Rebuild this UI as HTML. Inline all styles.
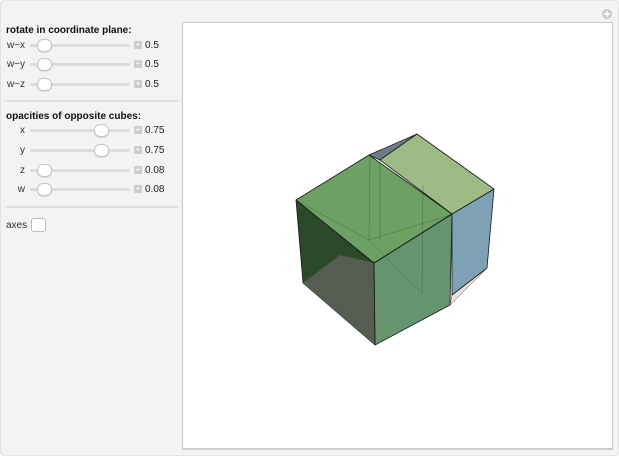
<!DOCTYPE html>
<html><head><style>
body{margin:0;width:619px;height:456px;background:#fff;font-family:"Liberation Sans",sans-serif;overflow:hidden}
.frame{position:absolute;left:0;top:0;width:617px;height:454px;background:#f3f3f3;border:1px solid #e4e4e4;border-radius:4px}
.panel{position:absolute;left:182px;top:22px;width:429px;height:425px;background:#fff;border:1px solid #c8c8c8;border-bottom:2px solid #ccc}
.h{position:absolute;left:6px;font-size:10px;font-weight:bold;color:#111}
.lbl{position:absolute;font-size:10px;color:#333;text-align:right;width:22px}
.track{position:absolute;left:30px;width:100px;height:3px;background:#dcdcdc;border-radius:2px}
.knob{position:absolute;width:13px;height:11px;border-radius:6px;background:#fff;border:1px solid #c4c4c4;box-shadow:0 1px 1px rgba(0,0,0,.1)}
.plus{position:absolute;left:134px;width:8px;height:8px;background:#ccc;border-radius:1px;color:#fff;font-size:8px;line-height:8px;text-align:center}
.val{position:absolute;left:145px;font-size:10px;color:#222}
.sep{position:absolute;left:6px;width:172px;height:2px;background:#dedede}
</style></head><body>
<div class="frame"></div>
<svg style="position:absolute;left:601px;top:8px" width="12" height="12"><circle cx="6" cy="6" r="5" fill="#c9c9c9"/><path d="M6 3v6M3 6h6" stroke="#fff" stroke-width="1.5"/></svg>
<div class="h" style="top:25px">rotate in coordinate plane:</div>
<div class="lbl" style="left:3px;top:40px">w−x</div><div class="track" style="top:44px"></div><div class="knob" style="left:37px;top:39px"></div><div class="plus" style="top:41px">+</div><div class="val" style="top:40px">0.5</div>
<div class="lbl" style="left:3px;top:59px">w−y</div><div class="track" style="top:63px"></div><div class="knob" style="left:37px;top:58px"></div><div class="plus" style="top:60px">+</div><div class="val" style="top:59px">0.5</div>
<div class="lbl" style="left:3px;top:79px">w−z</div><div class="track" style="top:83px"></div><div class="knob" style="left:37px;top:78px"></div><div class="plus" style="top:80px">+</div><div class="val" style="top:79px">0.5</div>
<div class="sep" style="top:100px"></div>
<div class="h" style="top:111px">opacities of opposite cubes:</div>
<div class="lbl" style="left:3px;top:125px">x</div><div class="track" style="top:129px"></div><div class="knob" style="left:94px;top:124px"></div><div class="plus" style="top:126px">+</div><div class="val" style="top:125px">0.75</div>
<div class="lbl" style="left:3px;top:145px">y</div><div class="track" style="top:149px"></div><div class="knob" style="left:94px;top:144px"></div><div class="plus" style="top:146px">+</div><div class="val" style="top:145px">0.75</div>
<div class="lbl" style="left:3px;top:165px">z</div><div class="track" style="top:169px"></div><div class="knob" style="left:37px;top:164px"></div><div class="plus" style="top:166px">+</div><div class="val" style="top:165px">0.08</div>
<div class="lbl" style="left:3px;top:184px">w</div><div class="track" style="top:188px"></div><div class="knob" style="left:37px;top:183px"></div><div class="plus" style="top:185px">+</div><div class="val" style="top:184px">0.08</div>
<div class="sep" style="top:206px"></div>
<div style="position:absolute;left:6px;top:220px;font-size:10px;color:#333">axes</div>
<div style="position:absolute;left:31px;top:218px;width:13px;height:12px;border:1px solid #bbb;border-radius:3px;background:#fff"></div>
<div class="panel"></div>
<svg style="position:absolute;left:0;top:0" width="619" height="456">
<g stroke="#1a1a1a" stroke-width="0.8" stroke-linejoin="round">
<polygon points="369,155 417,134 380,160" fill="#6d7d8a"/>
<polygon points="452,295 487,268 450,305" fill="#efe0da" stroke-width="0.4"/>
<polygon points="452,214 494,189 487,268 452,295" fill="#7ea1b5"/>
<polygon points="380,160 417,134 494,189 452,214" fill="#9dbb85"/>
<polygon points="296,200 374,263 375,345 303,283" fill="#2c4a2a"/>
<polygon points="303,283 340,255 374,263 375,345" fill="#555d52" stroke="none"/>
<polygon points="374,263 452,214 450,305 375,345" fill="#4a8255" fill-opacity="0.85"/>
<polygon points="296,200 369,155 452,214 374,263" fill="#58944d" fill-opacity="0.88"/>
<path d="M370,157 L369,240 L296,200 M423,185 L422,293 M369,240 L422,293 M369,240 L450,215 M380,160 L380,240 M340,255 L375,262" stroke="#2e5a2e" stroke-width="0.5" stroke-opacity="0.7" fill="none"/>
<path d="M296,200 L374,263 L452,214 M374,263 L375,345" fill="none"/>
</g>
</svg>
</body></html>
